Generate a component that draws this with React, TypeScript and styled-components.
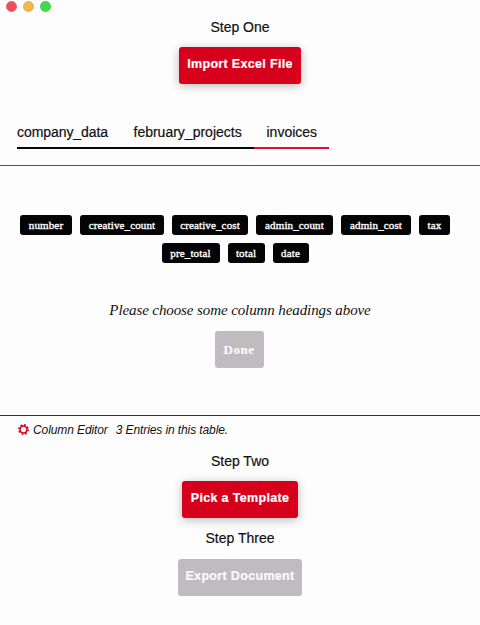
import React from "react";
import styled, { createGlobalStyle } from "styled-components";

const GlobalStyle = createGlobalStyle`
  * { box-sizing: border-box; }
  body { margin: 0; background: #fefdfe; }
`;

const sans = `"Liberation Sans", Arial, sans-serif`;
const serif = `Georgia, "Liberation Serif", serif`;

const Window = styled.main`
  display: flex;
  flex-direction: column;
  width: 480px;
  height: 625px;
  overflow: hidden;
  background: #fefdfe;
  color: #111;
  font-family: ${sans};
`;

const TitleBar = styled.header`
  display: flex;
  gap: 6px;
  height: 17px;
  padding: 1px 0 0 6px;
`;

const Light = styled.span<{ $color: string; $ring: string }>`
  width: 11px;
  height: 11px;
  border-radius: 50%;
  background: ${(p) => p.$color};
  border: 1px solid ${(p) => p.$ring};
`;

const Step = styled.section<{ $height: number }>`
  display: flex;
  flex-direction: column;
  align-items: center;
  height: ${(p) => p.$height}px;
`;

const StepTitle = styled.h2<{ $height?: number }>`
  margin: 0;
  height: ${(p) => p.$height ?? 30}px;
  line-height: 20px;
  font-size: 14px;
  font-weight: 400;
  -webkit-text-stroke: 0.2px currentColor;
`;

const Button = styled.button<{ $width: number; $serif?: boolean }>`
  width: ${(p) => p.$width}px;
  height: 37px;
  padding: ${(p) => (p.$serif ? "0" : "0 0 3px")};
  border: 0;
  border-radius: 3px;
  color: #fff;
  background: #d6001c;
  box-shadow: 0 2px 10px rgba(0, 0, 0, 0.28);
  font-family: ${(p) => (p.$serif ? serif : sans)};
  font-size: ${(p) => (p.$serif ? 13 : 12.5)}px;
  font-weight: 700;
  letter-spacing: ${(p) => (p.$serif ? 0.5 : 0.33)}px;
  white-space: nowrap;
  -webkit-text-stroke: 0.2px currentColor;

  &:disabled {
    color: #fbfafb;
    background: #bebcbe;
    box-shadow: none;
  }
`;

const Tabs = styled.nav`
  display: flex;
  height: 48px;
  padding-left: 17px;
`;

const Tab = styled.a<{ $width: number; $active?: boolean; $spacing?: number }>`
  width: ${(p) => p.$width}px;
  height: 32px;
  padding-left: ${(p) => (p.$active ? 12.5 : 0)}px;
  border-bottom: 2px solid ${(p) => (p.$active ? "#dc102f" : "#080808")};
  font-size: 14px;
  line-height: 30px;
  letter-spacing: ${(p) => p.$spacing ?? 0}px;
  white-space: nowrap;
  -webkit-text-stroke: 0.2px currentColor;
`;

const Editor = styled.section`
  display: flex;
  flex-direction: column;
  align-items: center;
  height: 251px;
  padding-top: 49px;
  border-top: 1px solid #555;
  border-bottom: 1px solid #333;
  font-family: ${serif};
`;

const Chips = styled.div`
  display: flex;
  flex-direction: column;
  align-items: center;
  gap: 8px;
  padding-right: 10px;
`;

const ChipRow = styled.div`
  display: flex;
  gap: 8px;
`;

const Chip = styled.span<{ $width: number }>`
  width: ${(p) => p.$width}px;
  height: 20px;
  border-radius: 3px;
  color: #fff;
  background: #050505;
  font-size: 11px;
  line-height: 20px;
  letter-spacing: 0.13px;
  text-align: center;
  white-space: nowrap;
  -webkit-text-stroke: 0.35px currentColor;
`;

const Hint = styled.p`
  height: 20px;
  margin: 37px 0 11px;
  font-size: 15px;
  line-height: 20px;
  font-style: italic;
  letter-spacing: -0.1px;
`;

const DoneRow = styled.div`
  display: flex;
  padding-right: 2px;
`;

const Status = styled.footer`
  display: flex;
  align-items: center;
  height: 35px;
  padding: 0 0 8px 18px;
  font-size: 12px;
  font-style: italic;
  letter-spacing: -0.1px;
`;

const Gear = styled.svg`
  width: 11px;
  height: 11px;
  margin-right: 4px;
`;

const Entries = styled.span`
  margin-left: 8px;
`;

const columns = [
  [
    { name: "number", width: 52 },
    { name: "creative_count", width: 84 },
    { name: "creative_cost", width: 76 },
    { name: "admin_count", width: 77 },
    { name: "admin_cost", width: 70 },
    { name: "tax", width: 31 },
  ],
  [
    { name: "pre_total", width: 58 },
    { name: "total", width: 37 },
    { name: "date", width: 36 },
  ],
];

export default function App() {
  return (
    <>
      <GlobalStyle />
      <Window>
        <TitleBar>
          <Light $color="#ef4c5c" $ring="#df6670" />
          <Light $color="#f5b942" $ring="#dfb15b" />
          <Light $color="#3edb4c" $ring="#4acb55" />
        </TitleBar>
        <Step $height={100}>
          <StepTitle>Step One</StepTitle>
          <Button $width={122}>Import Excel File</Button>
        </Step>
        <Tabs>
          <Tab $width={116.5} $spacing={-0.07}>company_data</Tab>
          <Tab $width={120.5}>february_projects</Tab>
          <Tab $width={75} $active>invoices</Tab>
        </Tabs>
        <Editor>
          <Chips>
            {columns.map((row, i) => (
              <ChipRow key={i}>
                {row.map((c) => (
                  <Chip key={c.name} $width={c.width}>{c.name}</Chip>
                ))}
              </ChipRow>
            ))}
          </Chips>
          <Hint>Please choose some column headings above</Hint>
          <DoneRow>
            <Button $width={49} $serif disabled>Done</Button>
          </DoneRow>
        </Editor>
        <Status>
          <Gear viewBox="0 0 11 11" fill="none" stroke="#d6001c">
            <circle cx="5.5" cy="5.5" r="3.5" strokeWidth="1.6" />
            <circle cx="5.5" cy="5.5" r="4.7" strokeWidth="1.5" strokeDasharray="1.85 1.84" />
          </Gear>
          <span>Column Editor</span>
          <Entries>3 Entries in this table.</Entries>
        </Status>
        <Step $height={77}>
          <StepTitle>Step Two</StepTitle>
          <Button $width={116}>Pick a Template</Button>
        </Step>
        <Step $height={90}>
          <StepTitle $height={31}>Step Three</StepTitle>
          <Button $width={124} disabled>Export Document</Button>
        </Step>
      </Window>
    </>
  );
}
